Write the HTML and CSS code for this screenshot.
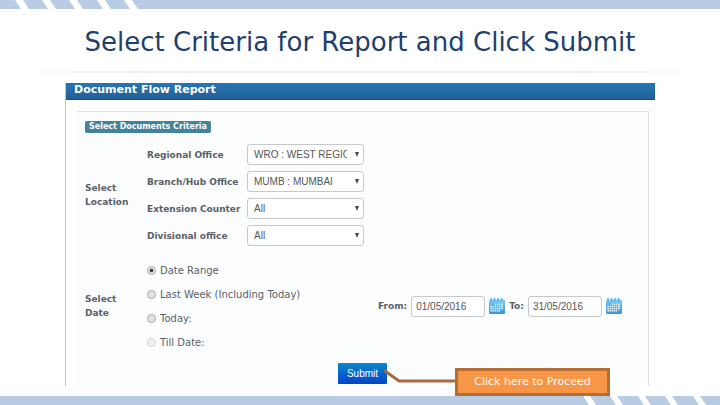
FILE: index.html
```html
<!DOCTYPE html>
<html lang="en">
<head>
    <meta charset="UTF-8">
    <meta name="viewport" content="width=device-width, initial-scale=1.0">
    <title>Document Flow Report</title>
    <link rel="stylesheet" href="styles.css">
</head>
<body>
    <div class="band">
        <svg class="stripes" viewBox="0 0 144 9" aria-hidden="true">
            <path d="M15 0h8l6 9h-8zM42 0h8l6 9h-8zM69 0h8l6 9h-8zM97 0h8l6 9h-8zM124 0h8l6 9h-8z"/>
        </svg>
    </div>

    <header class="header">
        <h1>Select Criteria for Report and Click Submit</h1>
    </header>

    <main class="panel">
        <h2 class="panel-title">Document Flow Report</h2>

        <form class="criteria">
            <h3 class="badge">Select Documents Criteria</h3>

            <section class="group">
                <h4 class="group-label">Select Location</h4>
                <div class="fields">
                    <label for="region">Regional Office</label>
                    <div class="select-box"><select id="region"><option>WRO : WEST REGION</option></select></div>
                    <label for="branch">Branch/Hub Office</label>
                    <div class="select-box"><select id="branch"><option>MUMB : MUMBAI</option></select></div>
                    <label for="counter">Extension Counter</label>
                    <div class="select-box"><select id="counter"><option>All</option></select></div>
                    <label for="division">Divisional office</label>
                    <div class="select-box"><select id="division"><option>All</option></select></div>
                </div>
            </section>

            <section class="group">
                <h4 class="group-label">Select Date</h4>
                <div class="options">
                    <label><input type="radio" name="period" checked>Date Range</label>
                    <label><input type="radio" name="period">Last Week (Including Today)</label>
                    <label><input type="radio" name="period">Today:</label>
                    <label><input type="radio" name="period" disabled>Till Date:</label>
                </div>
                <div class="dates">
                    <label for="from">From:</label>
                    <input type="text" id="from" value="01/05/2016">
                    <button type="button" class="calendar" aria-label="Pick start date">
                        <svg viewBox="0 0 16 16"><use href="#calendar"/></svg>
                    </button>
                    <label for="to">To:</label>
                    <input type="text" id="to" value="31/05/2016">
                    <button type="button" class="calendar" aria-label="Pick end date">
                        <svg viewBox="0 0 16 16"><use href="#calendar"/></svg>
                    </button>
                </div>
            </section>

            <div class="actions">
                <button type="submit" class="submit">Submit</button>
                <div class="callout">
                    <svg class="pointer" viewBox="0 0 72 16" aria-hidden="true">
                        <path d="M2 3L16 13H72"/>
                    </svg>
                    <div class="callout-text">Click here to Proceed</div>
                </div>
            </div>
        </form>
    </main>

    <div class="band band-bottom">
        <svg class="stripes" viewBox="0 0 144 9" aria-hidden="true">
            <path d="M7 0h7l6 9h-7zM34 0h7l6 9h-7zM62 0h7l6 9h-7zM89 0h7l6 9h-7zM117 0h7l6 9h-7z"/>
        </svg>
    </div>

    <!-- shared calendar icon -->
    <svg class="defs" aria-hidden="true">
        <defs>
            <linearGradient id="sky" x1="0" y1="0" x2="0" y2="1">
                <stop offset="0" stop-color="#7ccbf3"/>
                <stop offset="1" stop-color="#3a94d6"/>
            </linearGradient>
            <symbol id="calendar" viewBox="0 0 16 16">
                <rect y="1.5" width="16" height="14.5" rx="1.5" fill="url(#sky)"/>
                <path d="M2 0v3M5.500 0v3M9 0v3M12.500 0v3" stroke="#4faee6" stroke-width="1.500"/>
                <path d="M3.700 0v2M7.200 0v2M10.700 0v2" stroke="#e6f6ff"/>
                <path d="M5 5.500h9v6h-3v2H1.500v-6H5z" fill="#dff3fd"/>
                <path d="M1.500 7.500H14M1.500 9.500H14M1.500 11.500H14M3.500 5v9M5.500 5v9M7.500 5v9M9.500 5v9M11.500 5v9" stroke="#55b0e6" stroke-width=".7"/>
            </symbol>
        </defs>
    </svg>
</body>
</html>
```

FILE: styles.css
```css
* {
    margin: 0;
    padding: 0;
    box-sizing: border-box;
}

body {
    font-family: Verdana, 'DejaVu Sans', sans-serif;
    background: #fff;
    color: #5a6068;
    min-height: 100vh;
    display: flex;
    flex-direction: column;
}

.band {
    height: 9px;
    background: #b8cce4;
    display: flex;
}

.band-bottom {
    margin-top: auto;
    justify-content: flex-end;
}

.stripes {
    width: 144px;
    height: 9px;
    fill: #fff;
}

.header {
    height: 64px;
    padding-top: 4px;
    display: flex;
    align-items: center;
    justify-content: center;
    border-bottom: 2px solid;
    border-image: linear-gradient(90deg, #fff, #f0f0f0 20%, #f0f0f0 80%, #fff) 1;
}

.header h1 {
    color: #1f3f6e;
    font-size: 26px;
    font-weight: 400;
    white-space: nowrap;
}

.panel {
    margin: 10px 65px 0;
    border-left: 1px solid #c4c4c4;
}

.panel-title {
    height: 17px;
    padding-left: 8px;
    background: linear-gradient(#2676b4, #235f98);
    border-bottom: 1px solid #1c4c7c;
    color: #fff;
    font-size: 11px;
    line-height: 14px;
}

.criteria {
    border: 1px solid #dcdfe8;
    border-bottom: none;
    border-left-color: #f4f6fa;
    background: #fbfdff;
    margin: 11px 6px 0 11px;
    padding: 9px 8px 2px 7px;
}

.badge {
    display: table;
    background: #44829e;
    border-radius: 2px;
    color: #fff;
    font-size: 8px;
    line-height: 12px;
    padding: 0 4px;
    margin-bottom: 11px;
}

.group {
    display: flex;
    align-items: center;
    margin-bottom: 12px;
}

.group-label {
    width: 62px;
    padding-right: 16px;
    font-size: 9px;
    line-height: 14px;
}

.fields {
    display: grid;
    grid-template-columns: 100px 117px;
    row-gap: 6px;
    align-items: center;
    font-size: 9px;
    font-weight: 700;
}

.select-box {
    position: relative;
}

.select-box::after {
    content: '';
    position: absolute;
    right: 5px;
    top: 8px;
    border: 2px solid transparent;
    border-top: 5px solid #444;
    border-bottom: none;
    pointer-events: none;
}

select,
input[type="text"] {
    font-family: 'Liberation Sans', Arial, sans-serif;
    font-size: 10px;
    color: #555;
    height: 21px;
    border: 1px solid #c6c8cc;
    border-radius: 3px;
    background: #fff;
}

select {
    display: block;
    appearance: none;
    width: 100%;
    padding: 0 16px 0 6px;
}

.options {
    width: 231px;
    font-size: 10px;
}

.options label {
    display: flex;
    align-items: center;
    gap: 4px;
    height: 24px;
}

.options input {
    appearance: none;
    width: 9px;
    height: 9px;
    border: 1px solid #a8a8a8;
    border-radius: 50%;
    background: #e4e4e4;
}

.options input:checked {
    background: radial-gradient(#444 30%, #e4e4e4 45%);
}

.options input:disabled {
    border-color: #d0d0d0;
    background: #f0f0f0;
}

.dates {
    display: flex;
    align-items: center;
    gap: 4px;
    font-size: 9px;
    font-weight: 700;
}

.dates input {
    width: 74px;
    padding: 0 4px;
}

.calendar {
    width: 16px;
    height: 16px;
    border: none;
    background: none;
}

.calendar svg {
    display: block;
    width: 16px;
    height: 16px;
}

.actions {
    position: relative;
    width: 49px;
    margin: -3px auto 0;
}

.submit {
    display: block;
    width: 100%;
    height: 21px;
    border: none;
    border-radius: 1px;
    background: linear-gradient(#0a86cc, #0344c8);
    color: #fff;
    font-family: 'Liberation Sans', Arial, sans-serif;
    font-size: 10px;
}

/* sits over the form, pointing back at the submit button */
.callout {
    position: absolute;
    left: 45px;
    top: 5px;
    display: flex;
    align-items: flex-start;
}

.pointer {
    width: 72px;
    height: 16px;
    fill: none;
    stroke: #a8693c;
    stroke-width: 3;
    stroke-linecap: round;
}

.callout-text {
    width: 155px;
    height: 28px;
    border: 3px solid #b66d31;
    background: #f79646;
    color: #fff;
    font-size: 11px;
    line-height: 22px;
    text-align: center;
    white-space: nowrap;
}

.defs {
    position: absolute;
    width: 0;
    height: 0;
}
```
